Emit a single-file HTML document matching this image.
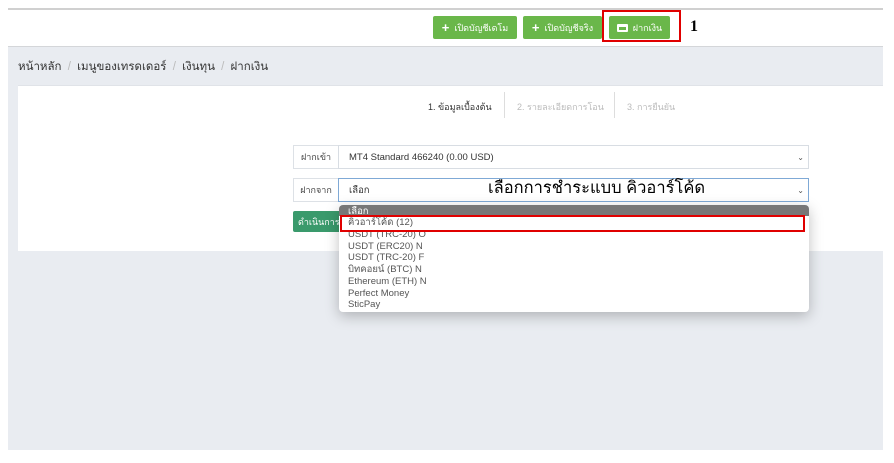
<!DOCTYPE html>
<html><head><meta charset="utf-8"><style>
*{box-sizing:border-box;margin:0;padding:0}
body{width:894px;height:463px;background:#fff;position:relative;overflow:hidden;font-family:"Liberation Sans","Noto Sans CJK SC",sans-serif;}
.a{position:absolute}
.btn{position:absolute;top:16px;height:23px;background:#6ab74a;color:#fff;font-size:9px;border-radius:2px;display:flex;align-items:center;justify-content:center;gap:5px}
.plus{font-weight:bold;font-size:13px;line-height:1}
.lbl{position:absolute;left:293px;width:46px;height:24px;border:1px solid #dde1e6;background:#fff;font-size:9px;color:#444;display:flex;align-items:center;justify-content:center}
.sel{position:absolute;left:338px;width:471px;height:24px;border:1px solid #d8dde3;background:#fff;font-size:9.5px;color:#333;display:flex;align-items:center;padding-left:10px}
.chev{position:absolute;right:4px;top:7px;font-size:8px;color:#555}
.opt{font-size:9.5px;color:#555;height:11.8px;display:flex;align-items:center;padding-left:9px;padding-top:1px;overflow:hidden;white-space:nowrap}
</style></head><body>
<div class="a" style="left:8px;top:8px;width:875px;height:2px;background:#d0d0d0"></div>
<div class="btn" style="left:433px;width:84px"><span class="plus">+</span>เปิดบัญชีเดโม</div>
<div class="btn" style="left:523px;width:79px"><span class="plus">+</span>เปิดบัญชีจริง</div>
<div class="btn" style="left:609px;width:61px"><span style="display:inline-block;width:11px;height:8px;border:2px solid #fff;border-top-width:3px;border-radius:1px"></span>ฝากเงิน</div>
<div class="a" style="left:602px;top:10px;width:79px;height:32px;border:2px solid #e00000"></div>
<div class="a" style="left:690px;top:18px;font-family:'Liberation Serif',serif;font-weight:bold;font-size:16px;color:#000">1</div>
<div class="a" style="left:8px;top:46px;width:875px;height:404px;background:#e9ecf1;border-top:1px solid #d4d6d9"></div>
<div class="a" style="left:18px;top:58px;font-size:11.5px;color:#333">หน้าหลัก <span style="color:#bbb;margin:0 3px">/</span> เมนูของเทรดเดอร์ <span style="color:#bbb;margin:0 3px">/</span> เงินทุน <span style="color:#bbb;margin:0 3px">/</span> ฝากเงิน</div>
<div class="a" style="left:18px;top:85px;width:865px;height:166px;background:#fff;border-top:1px solid #e0e3e8"></div>
<div class="a" style="left:428px;top:100px;font-size:9px;color:#333">1. ข้อมูลเบื้องต้น</div>
<div class="a" style="left:504px;top:92px;width:1px;height:26px;background:#ddd"></div>
<div class="a" style="left:517px;top:100px;font-size:9px;color:#bbb">2. รายละเอียดการโอน</div>
<div class="a" style="left:614px;top:92px;width:1px;height:26px;background:#ddd"></div>
<div class="a" style="left:627px;top:100px;font-size:9px;color:#bbb">3. การยืนยัน</div>
<div class="lbl" style="top:145px">ฝากเข้า</div>
<div class="sel" style="top:145px">MT4 Standard 466240 (0.00 USD)<span class="chev">⌄</span></div>
<div class="lbl" style="top:178px">ฝากจาก</div>
<div class="sel" style="top:178px;border-color:#7fa9d6">เลือก<span class="chev">⌄</span></div>
<div class="a" style="left:488px;top:175px;font-size:16.5px;color:#000">เลือกการชำระแบบ คิวอาร์โค้ด</div>
<div class="a" style="left:293px;top:211px;width:50px;height:21px;background:#3a9a6c;color:#fff;font-size:9px;display:flex;align-items:center;padding-left:5px;border-radius:2px;overflow:hidden;white-space:nowrap">ดำเนินการ</div>
<div class="a" style="left:339px;top:205px;width:470px;height:107px;background:#fff;border-radius:4px;box-shadow:0 4px 14px rgba(0,0,0,.25);overflow:hidden">
<div class="opt" style="background:#777;color:#fff;height:11px">เลือก</div>
<div class="opt">คิวอาร์โค้ด (12)</div>
<div class="opt">USDT (TRC-20) O</div>
<div class="opt">USDT (ERC20) N</div>
<div class="opt">USDT (TRC-20) F</div>
<div class="opt">บิทคอยน์ (BTC) N</div>
<div class="opt">Ethereum (ETH) N</div>
<div class="opt">Perfect Money</div>
<div class="opt">SticPay</div>
</div>
<div class="a" style="left:340px;top:215px;width:465px;height:17px;border:2px solid #e00000"></div>
</body></html>
